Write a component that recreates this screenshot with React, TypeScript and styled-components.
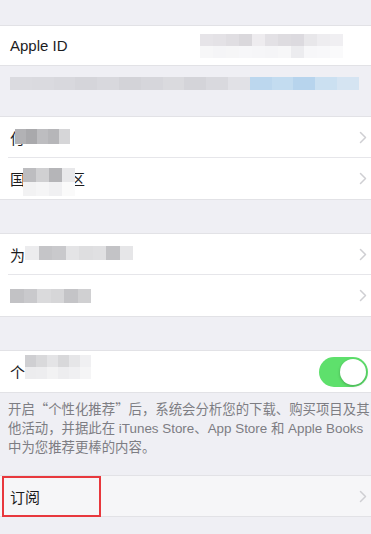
import React from "react";
import styled, { createGlobalStyle } from "styled-components";

const Global = createGlobalStyle`
  html, body { margin: 0; padding: 0; background: #efeff4; }
  body {
    font-family: "Liberation Sans", "Noto Sans CJK SC", sans-serif;
    -webkit-font-smoothing: antialiased;
  }
`;

const Page = styled.div`
  width: 371px;
  height: 534px;
  overflow: hidden;
  background: #efeff4;
  display: flex;
  flex-direction: column;
`;

const Spacer = styled.div<{ $h: number }>`
  height: ${(p) => p.$h}px;
  flex-shrink: 0;
`;

const Group = styled.div<{ $tint?: boolean }>`
  background: ${(p) => (p.$tint ? "#f6f6f8" : "#ffffff")};
  border-top: 1px solid #e2e2e6;
  border-bottom: 1px solid #e2e2e6;
  flex-shrink: 0;
`;

const Row = styled.div<{ $h?: number; $sep?: boolean }>`
  height: ${(p) => p.$h ?? 41}px;
  display: flex;
  align-items: center;
  padding: 0 4px 0 10px;
  position: relative;
  ${(p) =>
    p.$sep
      ? `&::after { content: ""; position: absolute; left: 8px; right: 0; bottom: 0; height: 1px; background: #e6e6ea; }`
      : ""}
`;

const Label = styled.div`
  position: relative;
  font-size: 15px;
  color: #1c1c1e;
  flex: 1;
  white-space: nowrap;
  display: flex;
  align-items: center;
`;

const Chevron = styled.svg`
  width: 8px;
  height: 13px;
  flex-shrink: 0;
`;

const MosaicGrid = styled.div<{ $cols: number; $cw: number; $ch: number }>`
  display: grid;
  grid-template-columns: repeat(${(p) => p.$cols}, ${(p) => p.$cw}px);
  grid-auto-rows: ${(p) => p.$ch}px;
  filter: blur(0.6px);
`;

const Overlay = styled.div<{ $left: number; $top: number }>`
  position: absolute;
  left: ${(p) => p.$left}px;
  top: ${(p) => p.$top}px;
`;

const Cell = styled.div``;

function Mosaic({ rows, cw, ch }: { rows: string[][]; cw: number; ch: number }) {
  const cols = rows[0].length;
  return (
    <MosaicGrid $cols={cols} $cw={cw} $ch={ch}>
      {rows.flatMap((r, i) =>
        r.map((c, j) => <Cell key={`${i}-${j}`} style={{ backgroundColor: c }} />)
      )}
    </MosaicGrid>
  );
}

const ChevronIcon = () => (
  <Chevron viewBox="0 0 8 13">
    <path d="M1.5 1.5 L6.5 6.5 L1.5 11.5" fill="none" stroke="#cfcfd3" strokeWidth="1.5" strokeLinecap="round" strokeLinejoin="round" />
  </Chevron>
);

const RightMosaic = styled.div`
  position: absolute;
  left: 200px;
  top: 8px;
`;

const BlurBand = styled.div`
  height: 50px;
  box-sizing: border-box;
  display: flex;
  flex-direction: column;
  padding: 11px 0 0 10px;
  flex-shrink: 0;
`;

const Toggle = styled.div<{ $on: boolean }>`
  width: 49px;
  height: 30px;
  border-radius: 15px;
  background: ${(p) => (p.$on ? "#5ee06c" : "#e5e5ea")};
  position: relative;
  flex-shrink: 0;
  margin-right: -1px;
`;

const Knob = styled.div`
  position: absolute;
  right: 2px;
  top: 2px;
  width: 26px;
  height: 26px;
  border-radius: 50%;
  background: #fff;
  box-shadow: 0 1px 3px rgba(0, 0, 0, 0.25);
`;

const Footer = styled.div`
  padding: 6px 4px 0 8px;
  font-size: 13.4px;
  line-height: 19px;
  color: #7d7d83;
  height: 82px;
  box-sizing: border-box;
  flex-shrink: 0;
  white-space: nowrap;
`;

const Quote = styled.span`
  font-family: "Noto Sans CJK SC", sans-serif;
`;

const Highlight = styled.div`
  position: absolute;
  left: 2px;
  top: 0px;
  width: 95px;
  height: 37px;
  border: 2px solid #e8383d;
`;

export default function App() {
  return (
    <Page>
      <Global />
      <Spacer $h={25} />
      <Group>
        <Row $h={39}>
          <Label>Apple ID</Label>
          <RightMosaic>
            <Mosaic
              cw={13}
              ch={12}
              rows={[
                ["#e6e4e8", "#e4e2e6", "#e0dee2", "#dad8dc", "#eeecef", "#e3e1e5", "#dedce0", "#dcdadf", "#e8e7ea", "#eeedf0", "#f0eff2"],
                ["#f7f7f8", "#f5f5f7", "#f6f6f7", "#f7f7f9", "#f6f6f8", "#f5f5f7", "#f7f7f8", "#ececef", "#f7f7f9", "#f8f8fa", "#fafafb"],
              ]}
            />
          </RightMosaic>
        </Row>
      </Group>
      <BlurBand>
        <Mosaic
          cw={21.8}
          ch={13}
          rows={[
            ["#dbdbe0", "#dadadf", "#d8d8dd", "#d5d5da", "#d8d8dd", "#d3d3d8", "#d6d6db", "#dadade", "#d4d4d9", "#d9d9de", "#e1e1e6", "#bcd7ee", "#c3dcf0", "#b7d4ed", "#cbe0f1", "#d5e4f2"],
          ]}
        />
      </BlurBand>
      <Group>
        <Row $sep>
          <Label>
            付
            <Overlay $left={5} $top={2}>
              <Mosaic cw={11} ch={15} rows={[["#b2b2b5", "#a9a9ac", "#bdbdc0", "#b6b6b9", "#d6d6d8", "#ffffff"]]} />
            </Overlay>
          </Label>
          <ChevronIcon />
        </Row>
        <Row>
          <Label>
            国家或地区
            <Overlay $left={13} $top={0}>
              <Mosaic cw={13} ch={14} rows={[["#bdbdc0", "#d0d0d2", "#b5b5b8", "#e8e8ea"], ["#f2f2f3", "#f5f5f6", "#f0f0f2", "#fafafa"]]} />
            </Overlay>
          </Label>
          <ChevronIcon />
        </Row>
      </Group>
      <Spacer $h={33} />
      <Group>
        <Row $sep>
          <Label>
            为
            <Overlay $left={15} $top={2}>
              <Mosaic
                cw={13.5}
                ch={14}
                rows={[["#ececee", "#c5c5c8", "#c9c9cc", "#e4e4e6", "#dedee0", "#e0e0e2", "#c3c3c6", "#e6e6e8"]]}
              />
            </Overlay>
          </Label>
          <ChevronIcon />
        </Row>
        <Row>
          <Label>
            <Mosaic
              cw={13.5}
              ch={14}
              rows={[["#c2c2c5", "#c9c9cc", "#dadadc", "#d6d6d8", "#c4c4c7", "#d0d0d2"]]}
            />
          </Label>
          <ChevronIcon />
        </Row>
      </Group>
      <Spacer $h={33} />
      <Group>
        <Row $h={41}>
          <Label>
            个
            <Overlay $left={15} $top={-6}>
              <Mosaic
                cw={11}
                ch={12}
                rows={[
                  ["#cfcfd2", "#d9d9db", "#e4e4e6", "#d8d8da", "#e6e6e8", "#f0f0f2"],
                  ["#ececee", "#ededef", "#f2f2f3", "#ededef", "#f0f0f2", "#f5f5f6"],
                ]}
              />
            </Overlay>
          </Label>
          <Toggle $on>
            <Knob />
          </Toggle>
        </Row>
      </Group>
      <Footer>
        开启<Quote>“</Quote>个性化推荐<Quote>”</Quote>后，系统会分析您的下载、购买项目及其
        <br />
        他活动，并据此在 iTunes Store、App Store 和 Apple Books
        <br />
        中为您推荐更棒的内容。
      </Footer>
      <Group $tint>
        <Row $h={40}>
          <Label>订阅</Label>
          <ChevronIcon />
          <Highlight />
        </Row>
      </Group>
    </Page>
  );
}
